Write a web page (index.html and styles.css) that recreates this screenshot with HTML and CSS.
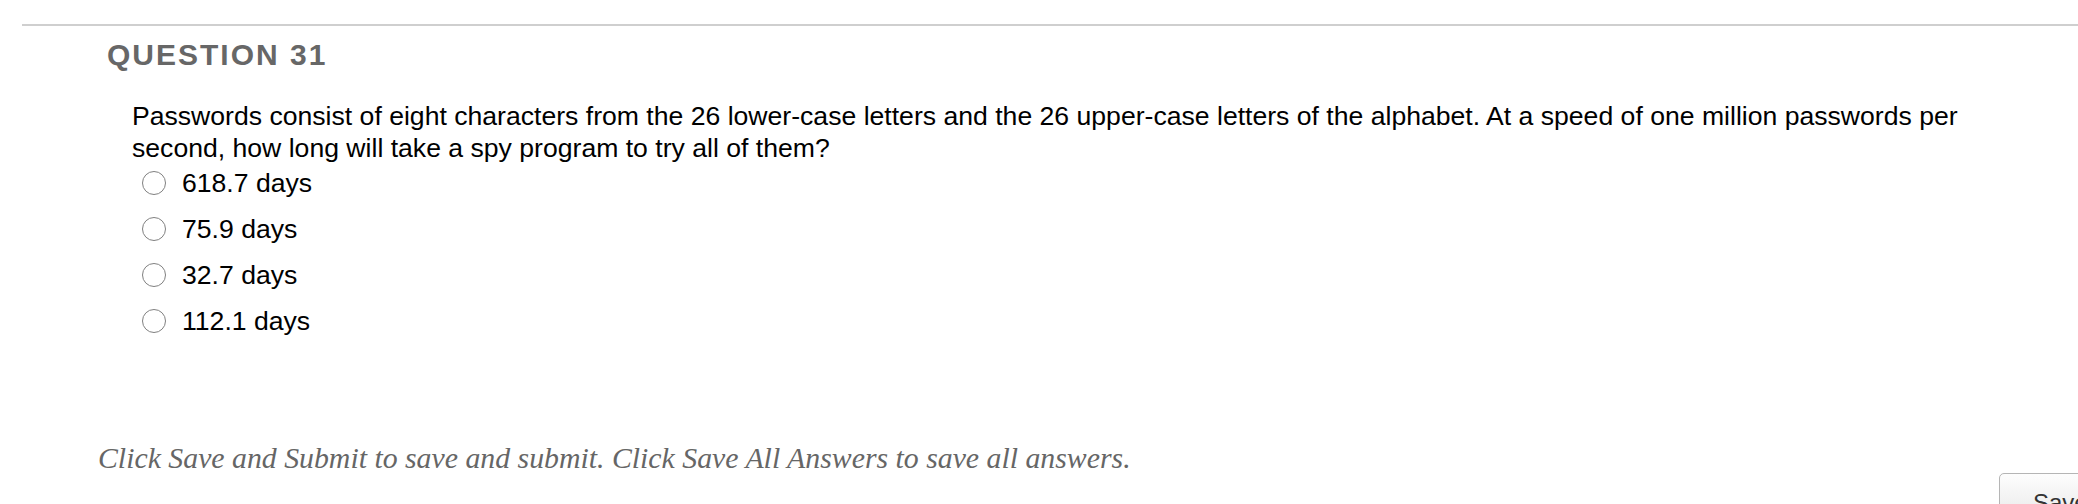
FILE: index.html
```html
<!DOCTYPE html>
<html lang="en">
  <head>
    <meta charset="UTF-8" />
    <meta name="viewport" content="width=device-width, initial-scale=1.0" />
    <title>Question 31</title>
    <link rel="stylesheet" href="styles.css">
  </head>
  <body>
    <div class="question-block">
      <h2 class="question-title">QUESTION 31</h2>

      <div class="question-text">
        Passwords consist of eight characters from the 26 lower-case letters and the 26 upper-case letters of the alphabet. At a speed of one million passwords per second, how long will take a spy program to try all of them?
      </div>

      <ul class="options">
        <li class="option"><span class="radio"></span><span>618.7 days</span></li>
        <li class="option"><span class="radio"></span><span>75.9 days</span></li>
        <li class="option"><span class="radio"></span><span>32.7 days</span></li>
        <li class="option"><span class="radio"></span><span>112.1 days</span></li>
      </ul>
    </div>

    <p class="save-hint">Click Save and Submit to save and submit. Click Save All Answers to save all answers.</p>

    <div class="submit-bar">
      <button class="button">Save All Answers</button>
    </div>
  </body>
</html>
```

FILE: styles.css
```css
body {
  font-family: "Liberation Sans", Arial, sans-serif;
  background-color: #fff;
  color: #000;
  margin: 0;
  overflow: hidden;
}

.question-block {
  margin: 24px 0 0 22px;
  border-top: 2px solid #cfcfcf;
}

.question-title {
  margin: 11.5px 0 0 85px;
  font-size: 30px;
  line-height: 34px;
  font-weight: bold;
  letter-spacing: 2px;
  color: #676767;
}

.question-text {
  margin: 28.5px 0 0 110px;
  width: 1880px;
  font-size: 26.6px;
  line-height: 32px;
}

.options {
  list-style: none;
  margin: 2.5px 0 0 120px;
  padding: 0;
  display: flex;
  flex-direction: column;
  gap: 14px;
}

.option {
  display: flex;
  align-items: center;
  gap: 16px;
  font-size: 26.6px;
  line-height: 32px;
}

.radio {
  flex: none;
  box-sizing: border-box;
  width: 24px;
  height: 24px;
  border: 1.5px solid #808080;
  border-radius: 50%;
  background-color: #fff;
}

.save-hint {
  margin: 104px 0 0 98px;
  font-family: Georgia, "Liberation Serif", serif;
  font-style: italic;
  font-size: 29.8px;
  line-height: 34px;
  color: #666;
}

.submit-bar {
  margin-top: -2px;
  padding-left: 1999px;
  white-space: nowrap;
}

.button {
  padding: 15px 20px 10px 33px;
  font-family: "Liberation Sans", Arial, sans-serif;
  font-size: 24px;
  color: #333;
  background: linear-gradient(#fdfdfd, #e6e6e6);
  border: 1.5px solid #b5b5b5;
  border-radius: 5px;
}
```
